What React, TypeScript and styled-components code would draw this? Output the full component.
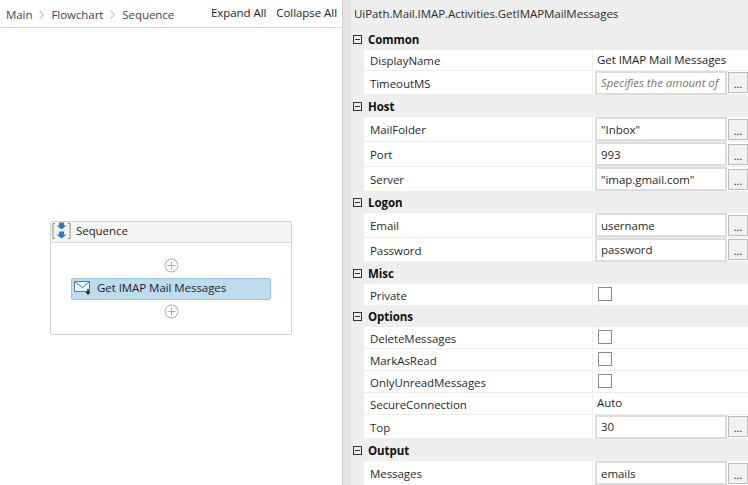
import React from 'react'
import styled, { createGlobalStyle } from 'styled-components'

const GlobalStyle = createGlobalStyle`
  html, body {
    margin: 0;
    padding: 0;
    background: #fff;
  }
  * {
    box-sizing: border-box;
  }
`

const Page = styled.div`
  width: 748px;
  height: 485px;
  display: flex;
  overflow: hidden;
  font-family: "Open Sans", "Noto Sans", sans-serif;
  font-size: 11.5px;
  letter-spacing: -0.06px;
  color: #1e1e1e;
`

const Designer = styled.div`
  width: 342px;
  flex: none;
  display: flex;
  flex-direction: column;
`

const Toolbar = styled.div`
  height: 28px;
  flex: none;
  display: flex;
  align-items: center;
  border-bottom: 1px solid #d9d9d9;
  padding: 0 5px 0 6px;
`

const Crumb = styled.span`
  color: #3c4654;
  position: relative;
  top: 1px;
`

const Chevron = styled.svg`
  width: 5px;
  height: 9px;
  margin: 1px 7px 0 7px;
  fill: none;
  stroke: #cfcfcf;
  stroke-width: 1.5;
`

const ToolLink = styled.span<{ $first?: boolean }>`
  margin-left: ${p => (p.$first ? 'auto' : '10px')};
  position: relative;
  top: -1px;
`

const Canvas = styled.div`
  flex: 1;
  padding: 193px 50px 0;
`

const Card = styled.div`
  width: 242px;
  height: 114px;
  border: 1px solid #d2d2d2;
  border-radius: 2px;
`

const CardHeader = styled.div`
  height: 21px;
  display: flex;
  align-items: center;
  gap: 5px;
  padding: 0 0 3px 1px;
  background: #f5f5f5;
  border-bottom: 1px solid #d9d9d9;
`

const CardBody = styled.div`
  display: flex;
  flex-direction: column;
  align-items: center;
  padding-top: 15px;
  gap: 4px;
`

const Activity = styled.div`
  width: 200px;
  height: 22px;
  margin-top: 1px;
  display: flex;
  align-items: center;
  gap: 5px;
  padding: 0 0 3px 2px;
  background: #bedbef;
  border: 1px solid #92c4e4;
  border-radius: 2px;
`

const Splitter = styled.div`
  width: 9px;
  flex: none;
  background: #e4e4e4;
  border-left: 1px solid #cfcfcf;
`

const Inspector = styled.div`
  flex: 1;
  background: #eeeeee;
  display: flex;
  flex-direction: column;
`

const InspectorTitle = styled.div`
  height: 29px;
  flex: none;
  display: flex;
  align-items: center;
  padding: 0 0 2px 3px;
  color: #2c2c2c;
`

const Category = styled.div<{ $h: number }>`
  height: ${p => p.$h}px;
  flex: none;
  display: flex;
  align-items: center;
  gap: 6px;
  padding-left: 2px;
  font-weight: 700;
  color: #111;
`

const Toggle = styled.span`
  width: 9px;
  height: 9px;
  flex: none;
  border: 1px solid #333;
  display: flex;
  align-items: center;
  justify-content: center;
  &::after {
    content: '';
    width: 5px;
    height: 1px;
    background: #333;
  }
`

const Row = styled.div<{ $h: number }>`
  height: ${p => p.$h}px;
  flex: none;
  margin-left: 13px;
  display: flex;
  background: #fff;
  border-bottom: 1px solid #eeeeee;
`

const Name = styled.div`
  width: 229px;
  flex: none;
  display: flex;
  align-items: center;
  padding-left: 6px;
  padding-top: 1px;
  border-right: 1px solid #f0f0f0;
  color: #2a2a2a;
`

const ValueCell = styled.div`
  flex: 1;
  display: flex;
  align-items: center;
  padding-left: 4px;
  gap: 1px;
  min-width: 0;
`

const Plain = styled.span`
  margin-top: -2px;
`

const Input = styled.div<{ $hint?: boolean }>`
  width: 132px;
  height: 24px;
  flex: none;
  display: flex;
  align-items: center;
  padding-left: 4px;
  margin-left: -2px;
  background: #fff;
  border: 2px solid #dcdcdc;
  overflow: hidden;
  white-space: nowrap;
  font-style: ${p => (p.$hint ? 'italic' : 'normal')};
  color: ${p => (p.$hint ? '#777' : '#2a2a2a')};
`

const More = styled.div`
  width: 20px;
  height: 21px;
  flex: none;
  display: flex;
  align-items: flex-end;
  justify-content: center;
  padding-bottom: 3px;
  line-height: 10px;
  background: #f1f1f1;
  border: 1px solid #bdbdbd;
  font-size: 11px;
`

const Check = styled.span`
  width: 14px;
  height: 14px;
  margin-left: 1px;
  margin-top: -2px;
  background: #fff;
  border: 1px solid #8a8a8a;
`

const SequenceIcon = () => (
  <svg width="19" height="18" viewBox="0 0 19 18">
    <path d="M3 1.500H1v15h2M16 1.500h2v15h-2" fill="none" stroke="#8a8a8a" strokeWidth="1" />
    <path d="M7 0.500h5v3h2.500L9.500 7.500 4.500 3.500H7z" fill="#2b7cd3" />
    <path d="M7 9.500h5v3h2.500l-5 4-5-4H7z" fill="#2b7cd3" />
  </svg>
)

const MailIcon = () => (
  <svg width="18" height="16" viewBox="0 0 18 16">
    <path d="M0.500 1.500h15v10h-15z" fill="#eaf4fb" stroke="#4a7fa8" />
    <path d="M1 2l7.500 5.500L15 2" fill="none" stroke="#4a7fa8" />
    <path d="M14 9v4" stroke="#1e1e1e" strokeWidth="1.500" />
    <path d="M11.500 12h5L14 15z" fill="#1e1e1e" />
  </svg>
)

const AddIcon = () => (
  <svg width="15" height="15" viewBox="0 0 15 15">
    <circle cx="7.500" cy="7.500" r="6.500" fill="#fff" stroke="#ababab" />
    <path d="M7.500 3.500v8M3.500 7.500h8" stroke="#ababab" />
  </svg>
)

type Prop = {
  name: string
  h: number
  plain?: string
  input?: string
  hint?: boolean
  check?: boolean
}

type Group = { title: string; h: number; props: Prop[] }

const groups: Group[] = [
  {
    title: 'Common',
    h: 21,
    props: [
      { name: 'DisplayName', h: 21, plain: 'Get IMAP Mail Messages' },
      { name: 'TimeoutMS', h: 24, input: 'Specifies the amount of', hint: true },
    ],
  },
  {
    title: 'Host',
    h: 22,
    props: [
      { name: 'MailFolder', h: 25, input: '"Inbox"' },
      { name: 'Port', h: 25, input: '993' },
      { name: 'Server', h: 25, input: '"imap.gmail.com"' },
    ],
  },
  {
    title: 'Logon',
    h: 21,
    props: [
      { name: 'Email', h: 25, input: 'username' },
      { name: 'Password', h: 24, input: 'password' },
    ],
  },
  { title: 'Misc', h: 22, props: [{ name: 'Private', h: 22, check: true }] },
  {
    title: 'Options',
    h: 21,
    props: [
      { name: 'DeleteMessages', h: 22, check: true },
      { name: 'MarkAsRead', h: 22, check: true },
      { name: 'OnlyUnreadMessages', h: 22, check: true },
      { name: 'SecureConnection', h: 22, plain: 'Auto' },
      { name: 'Top', h: 24, input: '30' },
    ],
  },
  { title: 'Output', h: 22, props: [{ name: 'Messages', h: 25, input: 'emails' }] },
]

const Crumbs = ['Main', 'Flowchart', 'Sequence']

export default function App() {
  return (
    <Page>
      <GlobalStyle />
      <Designer>
        <Toolbar>
          {Crumbs.map((c, i) => (
            <React.Fragment key={c}>
              {i > 0 && (
                <Chevron viewBox="0 0 5 9">
                  <path d="M0.500 0.500l4 4-4 4" />
                </Chevron>
              )}
              <Crumb>{c}</Crumb>
            </React.Fragment>
          ))}
          <ToolLink $first>Expand All</ToolLink>
          <ToolLink>Collapse All</ToolLink>
        </Toolbar>
        <Canvas>
          <Card>
            <CardHeader>
              <SequenceIcon />
              Sequence
            </CardHeader>
            <CardBody>
              <AddIcon />
              <Activity>
                <MailIcon />
                Get IMAP Mail Messages
              </Activity>
              <AddIcon />
            </CardBody>
          </Card>
        </Canvas>
      </Designer>
      <Splitter />
      <Inspector>
        <InspectorTitle>UiPath.Mail.IMAP.Activities.GetIMAPMailMessages</InspectorTitle>
        {groups.map(g => (
          <React.Fragment key={g.title}>
            <Category $h={g.h}>
              <Toggle />
              {g.title}
            </Category>
            {g.props.map(p => (
              <Row key={p.name} $h={p.h}>
                <Name>{p.name}</Name>
                <ValueCell>
                  {p.plain && <Plain>{p.plain}</Plain>}
                  {p.check && <Check />}
                  {p.input && <Input $hint={p.hint}>{p.input}</Input>}
                  {p.input && <More>...</More>}
                </ValueCell>
              </Row>
            ))}
          </React.Fragment>
        ))}
      </Inspector>
    </Page>
  )
}
